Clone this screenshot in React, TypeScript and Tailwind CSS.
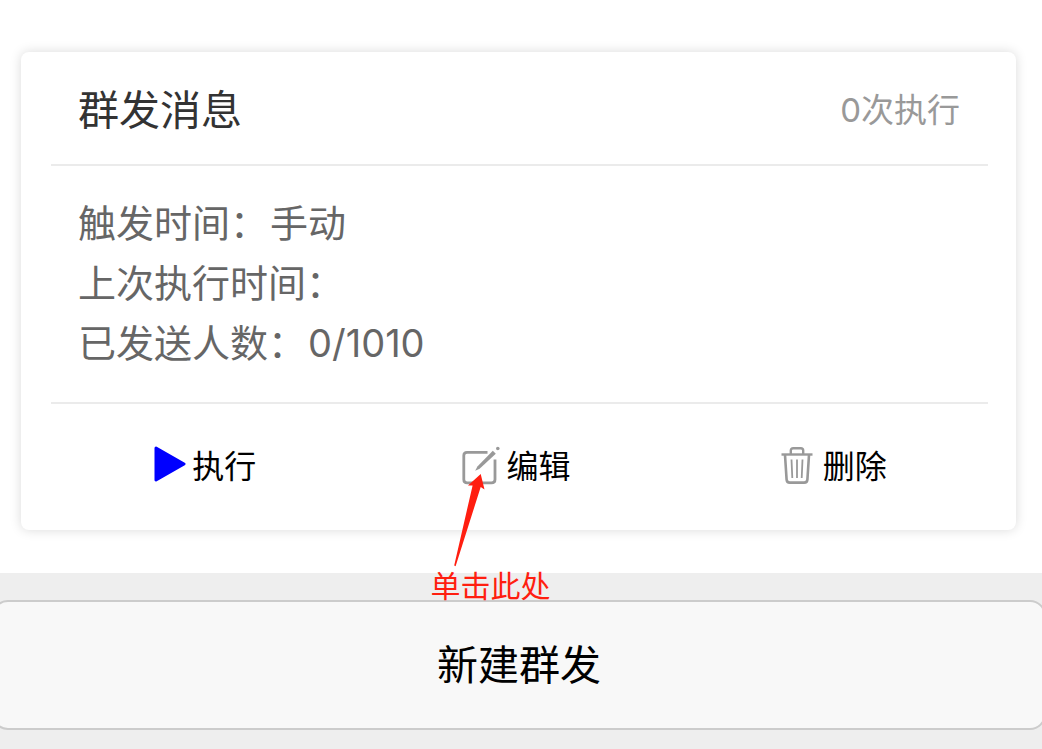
import React from 'react';

const PlayIcon = () => (
  <svg width="32" height="42" viewBox="0 0 32 42" aria-hidden="true">
    <path d="M2 2 L30 18 L2 34 Z" fill="#0000ff" stroke="#0000ff" strokeWidth="3" strokeLinejoin="round" />
  </svg>
);

const EditIcon = () => (
  <svg width="40" height="42" viewBox="0 0 40 42" fill="none" aria-hidden="true">
    <path
      d="M25.5 6.3 H5 Q1.8 6.3 1.8 9.5 V33.4 Q1.8 36.8 5.2 36.8 H29.5 Q33 36.8 33 33.4 V13.5"
      stroke="#999999"
      strokeWidth="2.8"
    />
    <path d="M13.2 24.8 L15.4 20.4 L30.8 4.8 L33.8 7.8 L17.6 22.8 Z" fill="#999999" />
    <circle cx="35.8" cy="2.5" r="1.8" fill="#999999" />
  </svg>
);

const TrashIcon = () => (
  <svg width="32" height="42" viewBox="0 0 32 42" fill="none" stroke="#999999" aria-hidden="true">
    <path d="M0.5 8.5 H31.5" strokeWidth="2.4" />
    <path d="M9.8 8 V4.6 Q9.8 2.2 12.2 2.2 H19.8 Q22.2 2.2 22.2 4.6 V8" strokeWidth="2.4" />
    <path d="M4 9 L5.6 33.6 Q5.8 36.6 8.8 36.6 H23.2 Q26.2 36.6 26.4 33.6 L28 9" strokeWidth="2.6" />
    <path d="M10.5 13.5 L11.3 32 M16 13.5 V32 M21.5 13.5 L20.7 32" strokeWidth="1.8" />
  </svg>
);

const ArrowMark = () => (
  <svg width="40" height="94" viewBox="0 0 40 94" aria-hidden="true">
    <path d="M30.7 0 L34.5 15.5 L30.7 13 L5.6 92.2 L4.2 91.6 L22.6 11.4 L18 11.6 Z" fill="#ff1e10" />
  </svg>
);

const details = [
  { label: '触发时间', value: '手动' },
  { label: '上次执行时间', value: '' },
  { label: '已发送人数', value: '0/1010' },
];

const TaskCard = () => (
  <section className="ml-[21px] mr-[26px] rounded-lg bg-white pl-[30px] pr-7 shadow-[0_0_12px_rgba(0,0,0,0.15)]">
    <header className="flex items-center justify-between border-b-2 border-[#ebebeb] pt-7 pr-7 pb-6 pl-[27px]">
      <h2 className="text-[41px] leading-[60px] text-[#333333]">群发消息</h2>
      <span className="text-[33px] leading-[60px] text-[#999999]">0次执行</span>
    </header>

    <dl className="border-b-2 border-[#ebebeb] pt-[27px] pr-7 pb-[29px] pl-[27px] text-[38px] leading-[60px] text-[#666666]">
      {details.map((item) => (
        <div key={item.label} className="flex gap-0.5">
          <dt>
            {item.label}
            {'\uff1a'}
          </dt>
          <dd>{item.value}</dd>
        </div>
      ))}
    </dl>

    <div className="grid grid-cols-3 py-[33px] text-[32px] leading-[60px] text-black">
      <button type="button" className="flex items-center justify-center gap-1.5 pr-1">
        <PlayIcon />
        <span>执行</span>
      </button>
      <div className="flex justify-center pr-1.5">
        <div className="relative">
          <button type="button" className="flex items-center gap-1">
            <EditIcon />
            <span>编辑</span>
          </button>
          {/* Click hint that points at the edit icon */}
          <div className="pointer-events-none absolute top-[37px] -left-8 z-10 w-32 text-[#ff1e10]">
            <div className="pl-5">
              <ArrowMark />
            </div>
            <p className="text-[30px] leading-9 whitespace-nowrap">单击此处</p>
          </div>
        </div>
      </div>
      <button type="button" className="flex items-center justify-center gap-2.5 pl-1">
        <TrashIcon />
        <span>删除</span>
      </button>
    </div>
  </section>
);

const App: React.FC = () => {
  return (
    <div
      lang="zh-CN"
      className="min-h-screen overflow-hidden bg-[#eeeeee] font-[Inter,'Noto_Sans_CJK_SC',sans-serif]"
    >
      <main className="bg-white pt-[52px] pb-[43px]">
        <TaskCard />
      </main>
      <footer className="-mr-1 -ml-2 pt-[27px] pb-[19px]">
        <button
          type="button"
          className="block w-full rounded-2xl border-2 border-[#cccccc] bg-[#f8f8f8] py-[33px] text-[41px] leading-[60px] text-black"
        >
          新建群发
        </button>
      </footer>
    </div>
  );
};

export default App;
